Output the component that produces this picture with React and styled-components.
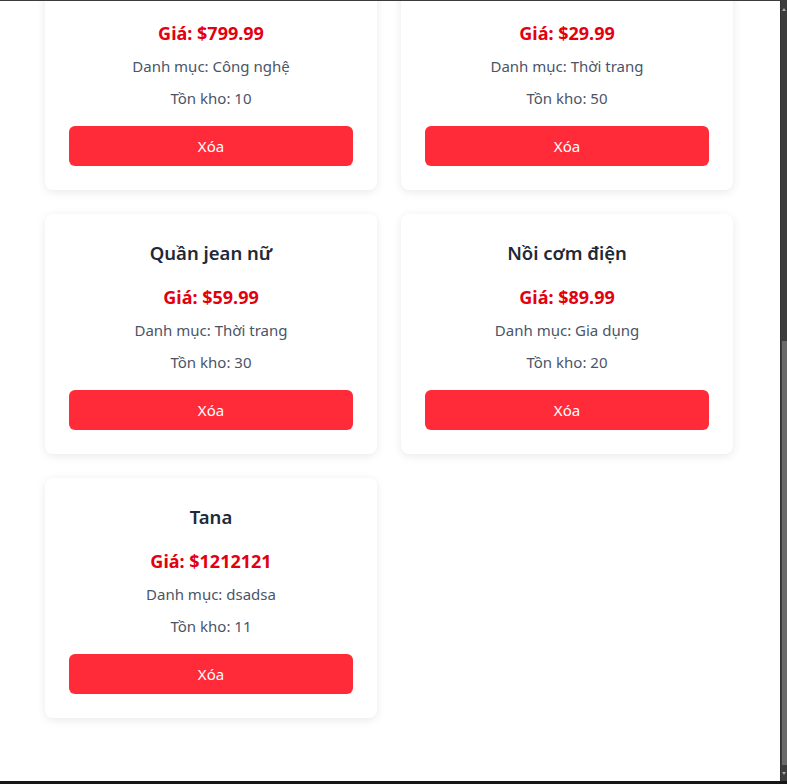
import styled, { createGlobalStyle } from "styled-components";

const GlobalStyle = createGlobalStyle`
  html, body {
    margin: 0;
    padding: 0;
    overflow: hidden;
    font-family: "Noto Sans", "Open Sans", sans-serif;
  }
`;

const Frame = styled.div`
  width: 100vw;
  height: 100vh;
  display: flex;
  flex-direction: column;
  box-sizing: border-box;
  border-top: 1px solid #3c3c3c;
  border-bottom: 3px solid #161616;
  background: #3b3b3b;
`;
const Body = styled.div`
  flex: 1;
  display: flex;
  min-height: 0;
`;
const Viewport = styled.div`
  flex: 1;
  overflow: hidden;
  background: #fff;
`;
const Scrollbar = styled.div`
  width: 7px;
  display: flex;
  flex-direction: column;
  background: #3d3d3d;
  border-left: 1px solid #333;
  box-sizing: border-box;
`;
const Arrow = styled.div`
  height: 16px;
  display: flex;
  align-items: center;
  justify-content: flex-end;
  padding-right: 1px;

  &::after {
    content: "";
    border-left: 2px solid transparent;
    border-right: 2px solid transparent;
    ${(p) =>
      p.$down
        ? "border-top: 3px solid #a8a8a8;"
        : "border-bottom: 3px solid #a8a8a8;"}
  }
`;
const Track = styled.div`
  flex: 1;
`;
const Thumb = styled.div`
  height: 424px;
  margin-left: 1px;
  background: #6a6a6a;
`;

const Grid = styled.div`
  display: grid;
  grid-template-columns: repeat(2, 332px);
  gap: 24px;
  padding: 0 0 40px 45px;
  margin-top: -51px;
`;
const Card = styled.div`
  background: #fff;
  border-radius: 8px;
  box-shadow: 0 2px 10px rgba(0, 0, 0, 0.09);
  padding: 24px;
  display: flex;
  flex-direction: column;
  align-items: stretch;
  text-align: center;
`;
const Title = styled.h3`
  margin: 0;
  font-size: 18.5px;
  line-height: 30px;
  font-weight: 600;
  color: #1f2937;
`;
const Price = styled.p`
  margin: 16px 0 0;
  font-size: 18px;
  line-height: 26px;
  font-weight: 700;
  color: #e3000f;
`;
const Info = styled.p`
  margin: 8px 0 0;
  font-size: 15px;
  line-height: 24px;
  color: #4a5568;
`;
const DeleteButton = styled.button`
  margin-top: 16px;
  height: 40px;
  border: none;
  border-radius: 6px;
  background: #ff2b38;
  color: #fff;
  font-family: inherit;
  font-size: 15px;
  cursor: pointer;
`;

const products = [
  { name: "Điện thoại", price: "799.99", category: "Công nghệ", stock: 10 },
  { name: "Áo thun nam", price: "29.99", category: "Thời trang", stock: 50 },
  { name: "Quần jean nữ", price: "59.99", category: "Thời trang", stock: 30 },
  { name: "Nồi cơm điện", price: "89.99", category: "Gia dụng", stock: 20 },
  { name: "Tana", price: "1212121", category: "dsadsa", stock: 11 },
];

export default function App() {
  return (
    <>
      <GlobalStyle />
      <Frame>
        <Body>
          <Viewport>
            <Grid>
              {products.map((p) => (
                <Card key={p.name}>
                  <Title>{p.name}</Title>
                  <Price>Giá: ${p.price}</Price>
                  <Info>Danh mục: {p.category}</Info>
                  <Info>Tồn kho: {p.stock}</Info>
                  <DeleteButton>Xóa</DeleteButton>
                </Card>
              ))}
            </Grid>
          </Viewport>
          <Scrollbar>
            <Arrow />
            <Track />
            <Thumb />
            <Arrow $down />
          </Scrollbar>
        </Body>
      </Frame>
    </>
  );
}
